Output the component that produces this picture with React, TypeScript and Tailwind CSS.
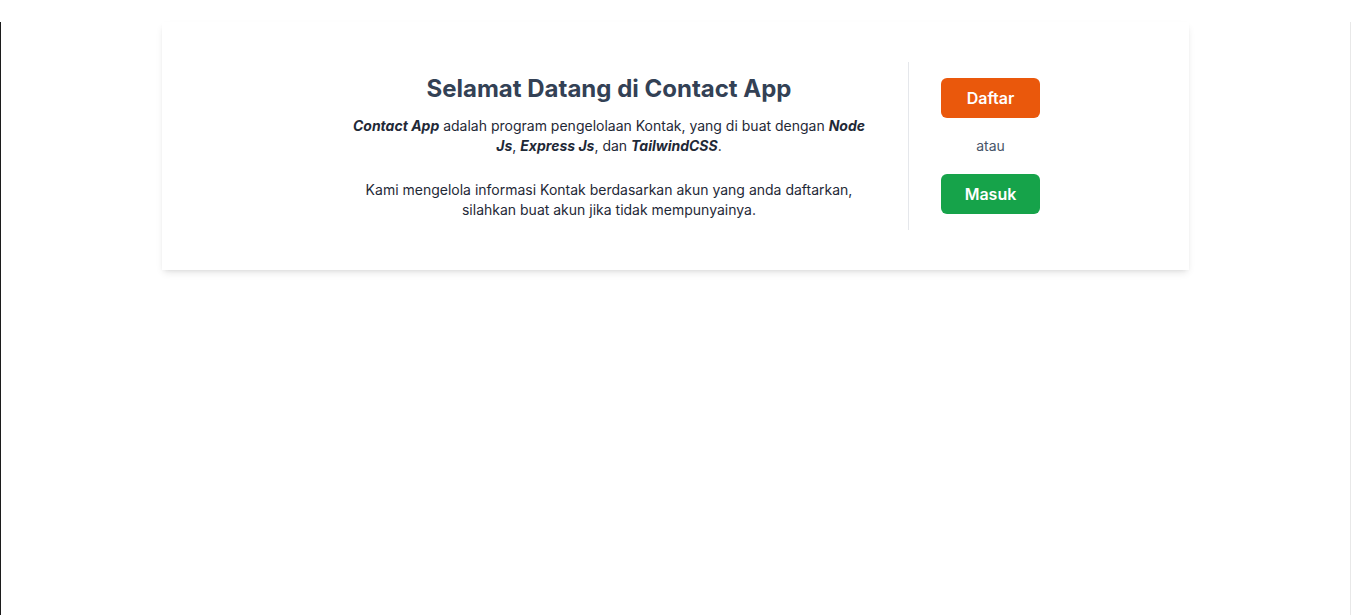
export default function App() {
  return (
    <div
      className="min-h-screen bg-white border-l border-[#1c1c1c] border-r border-r-[#e8e8e8] text-slate-800"
      style={{ fontFamily: "Inter, 'Noto Sans', sans-serif" }}
    >
      <div className="w-[1027px] mx-auto mt-[22px] bg-white shadow-[0_4px_8px_-2px_rgba(0,0,0,0.12),0_2px_4px_-2px_rgba(0,0,0,0.08)] py-10 pl-[189px] flex items-center">
        {/* Intro */}
        <div className="w-[516px] text-center">
          <h1 className="text-2xl font-bold text-[#334155] mb-[11px]">Selamat Datang di Contact App</h1>
          <p className="text-sm leading-5 text-[#1f2937]">
            <b className="italic">Contact App</b> adalah program pengelolaan Kontak, yang di buat dengan{' '}
            <b className="italic">Node Js</b>, <b className="italic">Express Js</b>, dan{' '}
            <b className="italic">TailwindCSS</b>.
          </p>
          <p className="text-sm leading-5 text-[#1f2937] mt-6">
            Kami mengelola informasi Kontak berdasarkan akun yang anda daftarkan, silahkan buat akun jika tidak
            mempunyainya.
          </p>
        </div>

        {/* Actions */}
        <div className="ml-[41px] self-stretch border-l border-gray-200 pl-8 py-4 flex flex-col items-center justify-center">
          <button className="w-[99px] h-10 rounded-md bg-[#ea580c] text-white font-semibold">Daftar</button>
          <span className="text-sm text-[#475569] my-[18px]">atau</span>
          <button className="w-[99px] h-10 rounded-md bg-[#16a34a] text-white font-semibold">Masuk</button>
        </div>
      </div>
    </div>
  );
}
